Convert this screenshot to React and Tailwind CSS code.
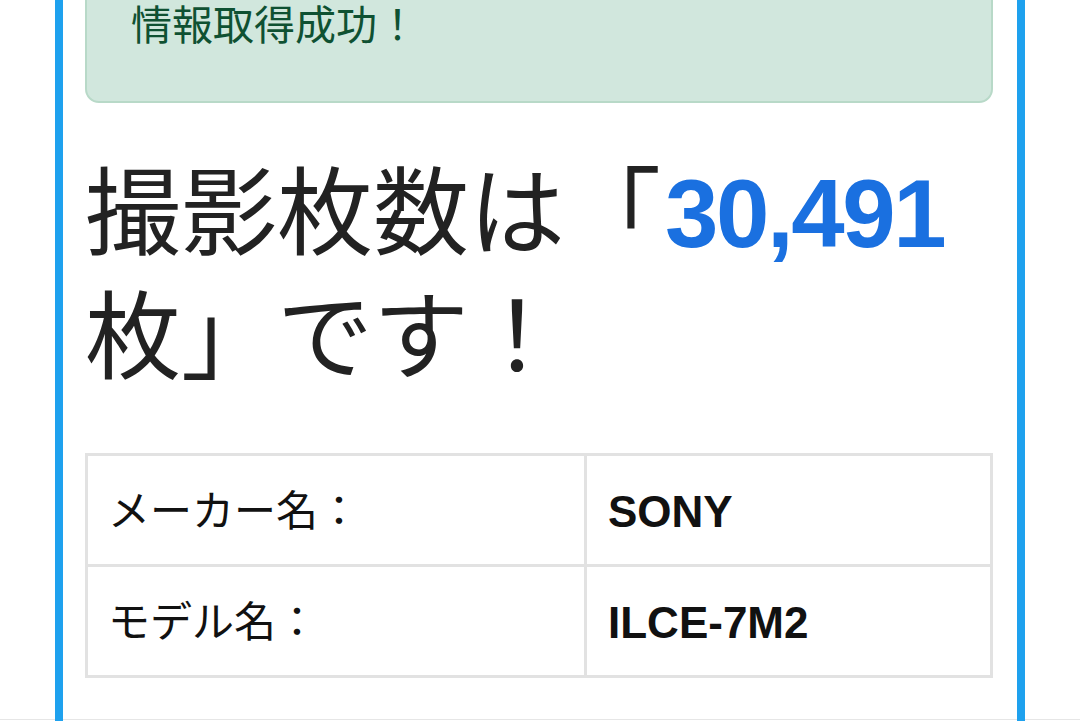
import React from "react";

const FONT = { fontFamily: '"Liberation Sans", "Noto Sans CJK JP", sans-serif' };

export default function App() {
  return (
    <div className="relative w-[1080px] h-[721px] overflow-hidden bg-white" style={FONT}>
      <div className="absolute left-0 right-0 top-[719px] h-px bg-[#e6e6e6]" />
      <div className="relative z-10 ml-[55px] flex h-[721px] w-[970px] flex-col border-x-[8px] border-[#1ea1ee] pl-[22px] pr-[24px]">
        <div className="mt-[-51px] rounded-[14px] border-2 border-[#b8d9c8] bg-[#d1e7dd] pt-[45px] pb-[45px] pl-[44px] text-[41px] leading-[60px] text-[#0f5132]">
          情報取得成功！
        </div>
        <h1 className="mt-[49px] text-[96px] leading-[124px] font-normal text-[#222222]">
          撮影枚数は「<span className="ml-[4px] font-bold tracking-[-2.4px] text-[#1a70e0]">30,491</span>
          <br />
          枚」です！
        </h1>
        <div className="mt-[53px] border-[3px] border-[#e2e2e2]">
          <div className="flex h-[111px] border-b-[3px] border-[#e2e2e2]">
            <div className="flex w-[499px] items-center border-r-[3px] border-[#e2e2e2] pl-[20px] pt-[3px] text-[42px] text-[#111111]">
              メーカー名：
            </div>
            <div className="flex flex-1 items-center pl-[21px] pt-[3px] text-[44px] font-bold text-[#111111]">
              SONY
            </div>
          </div>
          <div className="flex h-[108px]">
            <div className="flex w-[499px] items-center border-r-[3px] border-[#e2e2e2] pl-[20px] pt-[3px] text-[42px] text-[#111111]">
              モデル名：
            </div>
            <div className="flex flex-1 items-center pl-[21px] pt-[3px] text-[44px] font-bold text-[#111111]">
              ILCE-7M2
            </div>
          </div>
        </div>
      </div>
    </div>
  );
}
